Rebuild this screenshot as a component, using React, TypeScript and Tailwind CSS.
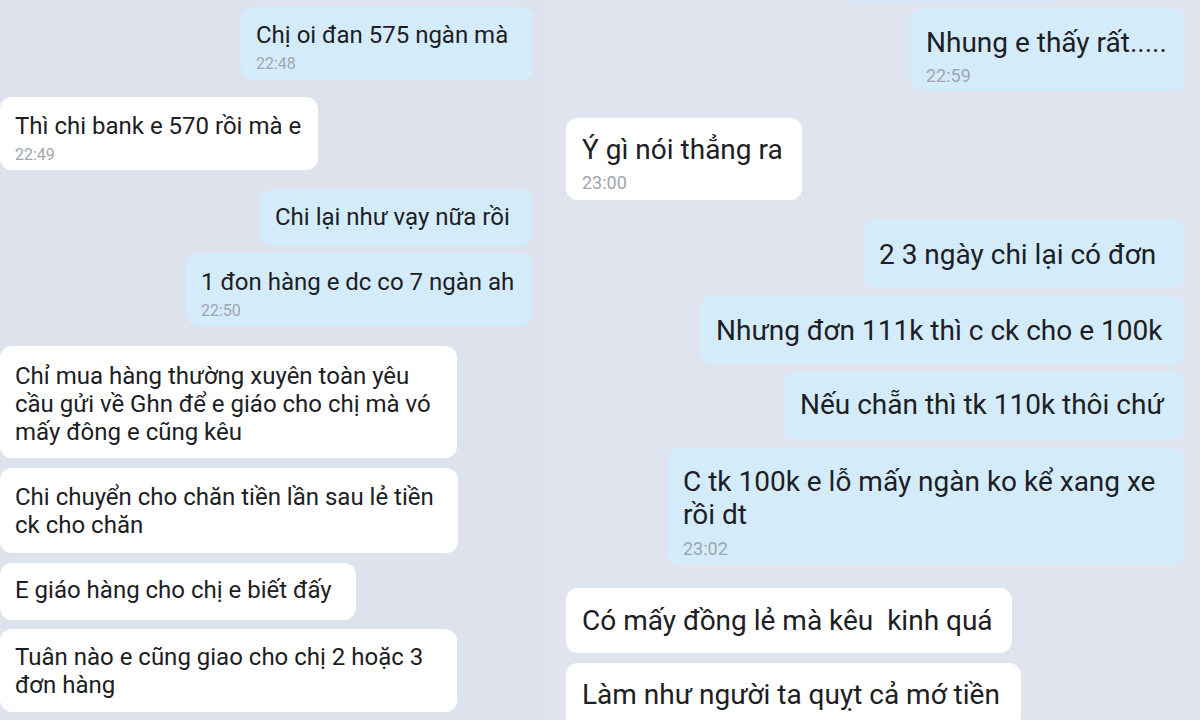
import React from "react";

type Msg = {
  out: boolean;
  lines: string[];
  time?: string;
  box: string;
  line: string;
  timeCls?: string;
};

const left: Msg[] = [
  {
    out: true,
    lines: ["Chị oi đan 575 ngàn mà"],
    time: "22:48",
    box: "w-[292px] mt-[7px] pt-[13px] pb-[6px]",
    line: "leading-[30px]",
    timeCls: "mt-[4px]",
  },
  {
    out: false,
    lines: ["Thì chi bank e 570 rồi mà e"],
    time: "22:49",
    box: "w-[318px] mt-[17px] pt-[14px] pb-[5px]",
    line: "leading-[30px]",
    timeCls: "mt-[4px]",
  },
  {
    out: true,
    lines: ["Chi lại như vạy nữa rồi"],
    box: "w-[273px] mt-[20px] pt-[12px] pb-[14px]",
    line: "leading-[30px]",
  },
  {
    out: true,
    lines: ["1 đon hàng e dc co 7 ngàn ah"],
    time: "22:50",
    box: "w-[347px] mt-[7px] pt-[14px] pb-[5px]",
    line: "leading-[30px]",
    timeCls: "mt-[4px]",
  },
  {
    out: false,
    lines: ["Chỉ mua hàng thường xuyên toàn yêu", "cầu gửi về Ghn để e giáo cho chị mà vó", "mấy đông e cũng kêu"],
    box: "w-[457px] mt-[20px] pt-[16px] pb-[12px]",
    line: "leading-[28px]",
  },
  {
    out: false,
    lines: ["Chi chuyển cho chăn tiền lần sau lẻ tiền", "ck cho chăn"],
    box: "w-[458px] mt-[10px] pt-[15px] pb-[14px]",
    line: "leading-[28px]",
  },
  {
    out: false,
    lines: ["E giáo hàng cho chị e biết đấy"],
    box: "w-[356px] mt-[10px] pt-[13px] pb-[16px]",
    line: "leading-[28px]",
  },
  {
    out: false,
    lines: ["Tuân nào e cũng giao cho chị 2 hoặc 3", "đơn hàng"],
    box: "w-[457px] mt-[9px] pt-[14px] pb-[13px]",
    line: "leading-[28px]",
  },
];

const right: Msg[] = [
  {
    out: true,
    lines: ["Nhung e thấy rất....."],
    time: "22:59",
    box: "w-[275px] mt-[5px] pt-[18px] pb-[4px]",
    line: "leading-[34px]",
    timeCls: "mt-[5px]",
  },
  {
    out: false,
    lines: ["Ý gì nói thẳng ra"],
    time: "23:00",
    box: "w-[236px] mt-[27px] pt-[15px] pb-[6px]",
    line: "leading-[34px]",
    timeCls: "mt-[5px]",
  },
  {
    out: true,
    lines: ["2 3 ngày chi lại có đơn"],
    box: "w-[322px] mt-[20px] pt-[18px] pb-[16px]",
    line: "leading-[34px]",
  },
  {
    out: true,
    lines: ["Nhưng đơn 111k thì c ck cho e 100k"],
    box: "w-[485px] mt-[8px] pt-[18px] pb-[16px]",
    line: "leading-[34px]",
  },
  {
    out: true,
    lines: ["Nếu chẵn thì tk 110k thôi chứ"],
    box: "w-[401px] mt-[8px] pt-[16px] pb-[18px]",
    line: "leading-[34px]",
  },
  {
    out: true,
    lines: ["C tk 100k e lỗ mấy ngàn ko kể xang xe", "rồi dt"],
    time: "23:02",
    box: "w-[518px] mt-[8px] pt-[17px] pb-[5px]",
    line: "leading-[33px]",
    timeCls: "mt-[7px]",
  },
  {
    out: false,
    lines: ["Có mấy đồng lẻ mà kêu  kinh quá"],
    box: "w-[446px] mt-[23px] pt-[16px] pb-[15px]",
    line: "leading-[34px]",
  },
  {
    out: false,
    lines: ["Làm như người ta quỵt cả mớ tiền"],
    box: "w-[455px] mt-[10px] pt-[15px] pb-[16px]",
    line: "leading-[34px]",
  },
];

function Bubble({ m, big }: { m: Msg; big: boolean }) {
  return (
    <div
      className={[
        "rounded-[12px] shrink-0",
        m.out ? "self-end bg-[#d4ecfa]" : "self-start bg-white",
        big ? "pl-[16px]" : "pl-[15px]",
        m.box,
      ].join(" ")}
    >
      {m.lines.map((l, i) => (
        <div
          key={i}
          className={[
            "whitespace-pre text-[#1c2024]",
            big ? "text-[28px]" : "text-[24px]",
            m.line,
          ].join(" ")}
        >
          {l}
        </div>
      ))}
      {m.time && (
        <div
          className={[
            "text-[#9ea6ae]",
            big ? "text-[18px] leading-[22px]" : "text-[16px] leading-[20px]",
            m.timeCls ?? "",
          ].join(" ")}
        >
          {m.time}
        </div>
      )}
    </div>
  );
}

export default function App() {
  return (
    <div className="w-[1200px] h-[720px] overflow-hidden flex bg-[#dfe3ed] font-['Roboto','Noto_Sans',sans-serif]">
      <div className="w-[545px] h-full flex flex-col pr-[12px] bg-[#dde2ec]">
        {left.map((m, i) => (
          <Bubble key={i} m={m} big={false} />
        ))}
      </div>
      <div className="w-[655px] h-full flex flex-col pl-[21px] pr-[15px] bg-[#e0e4ee]">
        <div className="self-end mr-[125px] w-[210px] h-[3px] bg-[#d6e8f6] rounded-b-[10px] shrink-0" />
        {right.map((m, i) => (
          <Bubble key={i} m={m} big={true} />
        ))}
      </div>
    </div>
  );
}
